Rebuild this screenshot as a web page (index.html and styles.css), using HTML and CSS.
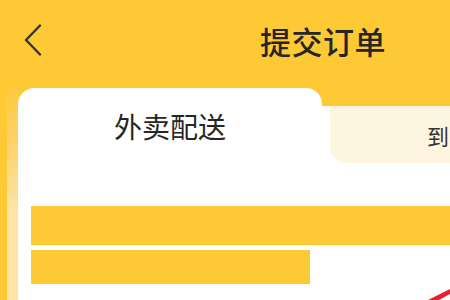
FILE: index.html
```html
<!DOCTYPE html>
<html lang="zh-CN">
<head>
    <meta charset="UTF-8">
    <title>提交订单</title>
    <link rel="stylesheet" href="styles.css">
</head>
<body>
    <header class="topbar">
        <svg class="back-icon" width="18" height="32" viewBox="0 0 18 32">
            <path d="M16 1.5 L2 16 L16 30.5" fill="none" stroke="#333" stroke-width="2.4" stroke-linecap="round" stroke-linejoin="round"/>
        </svg>
        <h1 class="title">提交订单</h1>
    </header>

    <section class="sheet">
        <div class="card">
            <div class="tabs">
                <div class="tab tab-active">外卖配送</div>
                <div class="tab-other">
                    <div class="tab tab-cream">到</div>
                </div>
            </div>
            <div class="content">
                <div class="bar bar-long"></div>
                <div class="bar bar-short"></div>
                <svg class="ribbon" width="22" height="14" viewBox="0 0 22 14">
                    <polygon points="0,14 22,3 22,8 11,14" fill="#e3232b"/>
                </svg>
            </div>
        </div>
    </section>
</body>
</html>
```

FILE: styles.css
```css
* {
    box-sizing: border-box;
}

body {
    margin: 0;
    width: 450px;
    height: 300px;
    overflow: hidden;
    background-color: #fdc934;
    font-family: "Noto Sans CJK SC", "Noto Sans", sans-serif;
    color: #262626;
}

.topbar {
    display: flex;
    align-items: center;
    height: 80px;
    padding-left: 24px;
}

.back-icon {
    display: block;
    flex-shrink: 0;
}

.title {
    margin: 0 0 0 218px;
    font-size: 31px;
    font-weight: 500;
    white-space: nowrap;
    letter-spacing: 0.5px;
}

.sheet {
    margin-top: 8px;
    margin-left: 7px;
    padding-left: 11px;
    height: 212px;
    background: linear-gradient(#fdca3e, #fdd370 60px, #fbe4a4 120px);
}

.card {
    height: 100%;
    display: flex;
    flex-direction: column;
    background-color: #fdc934;
}

.tabs {
    display: flex;
    height: 77px;
    flex-shrink: 0;
}

.tab {
    display: flex;
    align-items: center;
    white-space: nowrap;
}

.tab-active {
    width: 304px;
    justify-content: center;
    background-color: #fff;
    border-radius: 16px 16px 0 0;
    font-size: 28px;
    padding-bottom: 2px;
}

.tab-other {
    flex: 1;
    padding-top: 18px;
    background: linear-gradient(#fdc934 18px, #fff 18px);
    overflow: hidden;
}

.tab-cream {
    height: 57px;
    margin-left: 8px;
    padding-left: 97px;
    background-color: #fdf5df;
    border-radius: 0 0 0 16px;
    font-size: 22px;
    color: #333;
}

.content {
    position: relative;
    flex: 1;
    background-color: #fff;
    padding: 41px 0 0 13px;
}

.bar {
    background-color: #fdc934;
}

.bar-long {
    height: 39px;
}

.bar-short {
    width: 279px;
    height: 34px;
    margin-top: 5px;
}

.ribbon {
    position: absolute;
    right: 0;
    bottom: 0;
}
```
